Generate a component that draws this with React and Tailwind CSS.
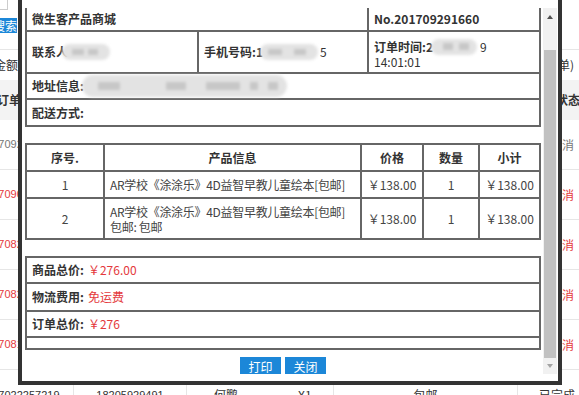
import React from 'react';

function Blur({ className = '', spots = [] }) {
  return (
    <span className={`relative inline-flex items-center rounded-full bg-[#e3e3e3] blur-[1.5px] ${className}`}>
      {spots.map((s, i) => (
        <span key={i} className={`absolute top-[30%] h-[40%] bg-[#c7c7c7] ${s}`} />
      ))}
    </span>
  );
}

const B = 'border-[#666]';

export default function App() {
  const rows = [
    { no: '201709291660', c: 'text-[#777]' },
    { no: '201709021530', c: 'text-[#e4393c]' },
    { no: '201708281202', c: 'text-[#e4393c]' },
    { no: '201708251135', c: 'text-[#e4393c]' },
    { no: '201708161019', c: 'text-[#e4393c]' },
  ];
  return (
    <div className="relative w-[579px] h-[395px] overflow-hidden bg-white font-['Noto_Sans_CJK_SC','Liberation_Sans',sans-serif] text-[12px] text-[#333]">
      {/* background page */}
      <div className="flex flex-col">
        <div className="h-[50px] flex flex-col border-b border-[#e6e6e6]">
          <div className="h-[10px] w-[8px] border border-t-0 border-l-0 border-[#ccc]" />
          <div className="mt-[8px] h-[15px] w-[17px] bg-[#1c87d8] text-white flex justify-end overflow-hidden leading-[15px]">
            <span className="whitespace-nowrap">搜索</span>
          </div>
        </div>
        <div className="h-[30px] flex justify-between items-center">
          <div className="w-[18px] flex justify-end overflow-hidden whitespace-nowrap">金额</div>
          <div className="pr-[5px] whitespace-nowrap">(多选订单)</div>
        </div>
        <div className="h-[40px] flex justify-between items-center bg-[#f3f3f3] font-bold">
          <div className="ml-[-3px] whitespace-nowrap">订单号</div>
          <div className="w-[46px] flex justify-center whitespace-nowrap">订单状态</div>
        </div>
        {rows.map((r, i) => (
          <div key={i} className="h-[50px] flex justify-between items-center border-b border-[#e6e6e6]">
            <div className={`ml-[-20px] text-[11px] font-['Liberation_Sans',sans-serif] ${r.c}`}>{r.no}</div>
            <div className={`w-[46px] flex justify-center whitespace-nowrap ${r.c}`}>已取消</div>
          </div>
        ))}
        <div className="h-[50px] grid grid-cols-[73px_113px_147px_184px_1fr] items-center">
          <div className="ml-[-20px] text-[11px] font-['Liberation_Sans',sans-serif]">2017022257219</div>
          <div className="h-full border-l border-[#e6e6e6] flex items-center justify-center text-[11px] font-['Liberation_Sans',sans-serif]">18205929491</div>
          <div className="h-full border-l border-[#e6e6e6] flex items-center pl-[27px] gap-[60px]"><span>何鹏</span><span>X1</span></div>
          <div className="h-full border-l border-[#e6e6e6] flex items-center justify-center">包邮</div>
          <div className="h-full border-l border-[#e6e6e6] flex items-center pl-[21px] whitespace-nowrap">已完成</div>
        </div>
      </div>

      {/* modal */}
      <div className="absolute left-[18px] top-[-4px] w-[544px] h-[389px] border-4 border-[#333] bg-white flex pt-[8px] pl-[3px] pr-[1px]">
        <div className="w-[516px] h-[366px] overflow-hidden flex flex-col">
          {/* info table */}
          <div className={`border-x-2 border-b-2 ${B}`}>
            <div className="h-[22px] flex">
              <div className="w-[340px] pl-[5px] flex items-center font-bold">微生客产品商城</div>
              <div className={`flex-1 border-l-2 ${B} pl-[5px] flex items-center font-bold`}>No.201709291660</div>
            </div>
            <div className={`h-[42px] flex border-t-2 ${B}`}>
              <div className="w-[170px] pl-[5px] flex items-center">
                <span className="font-bold">联系人</span>
                <Blur className="w-[48px] h-[16px] ml-[-6px]" spots={['left-[10px] w-[12px]', 'left-[26px] w-[10px]']} />
              </div>
              <div className={`w-[170px] border-l-2 ${B} pl-[5px] flex items-center`}>
                <span className="font-bold">手机号码:1</span>
                <Blur className="w-[58px] h-[16px] ml-[-3px]" spots={['left-[8px] w-[14px]', 'left-[34px] w-[12px]']} />
                <span className="ml-[2px]">5</span>
              </div>
              <div className={`flex-1 border-l-2 ${B} pl-[5px] pt-[3px] flex flex-col justify-center leading-[14px]`}>
                <div className="flex items-center">
                  <span className="font-bold">订单时间:2</span>
                  <Blur className="w-[46px] h-[16px] ml-[-2px]" spots={['left-[12px] w-[10px]', 'left-[28px] w-[10px]']} />
                  <span className="ml-[3px]">9</span>
                </div>
                <div>14:01:01</div>
              </div>
            </div>
            <div className={`h-[26px] flex items-center border-t-2 ${B} pl-[5px]`}>
              <span className="font-bold">地址信息:</span>
              <Blur
                className="w-[205px] h-[22px] ml-[-2px]"
                spots={['left-[16px] w-[22px]', 'left-[84px] w-[20px]', 'left-[124px] w-[34px]', 'left-[168px] w-[8px]', 'left-[186px] w-[10px]']}
              />
            </div>
            <div className={`h-[27px] flex items-center border-t-2 ${B} pl-[5px] font-bold`}>配送方式:</div>
          </div>

          {/* product table */}
          <div className={`mt-[16px] border-2 ${B}`}>
            <div className="h-[25px] flex font-bold">
              <div className="w-[76px] flex items-center justify-center">序号.</div>
              <div className={`w-[257px] border-l-2 ${B} flex items-center justify-center`}>产品信息</div>
              <div className={`w-[62px] border-l-2 ${B} flex items-center justify-center`}>价格</div>
              <div className={`w-[56px] border-l-2 ${B} flex items-center justify-center`}>数量</div>
              <div className={`flex-1 border-l-2 ${B} flex items-center justify-center`}>小计</div>
            </div>
            <div className={`h-[27px] flex border-t-2 ${B} text-[#444]`}>
              <div className="w-[76px] flex items-center justify-center">1</div>
              <div className={`w-[257px] border-l-2 ${B} flex items-center pl-[5px] whitespace-nowrap tracking-[-0.3px]`}>AR学校《涂涂乐》4D益智早教儿童绘本[包邮]</div>
              <div className={`w-[62px] border-l-2 ${B} flex items-center justify-center`}>￥138.00</div>
              <div className={`w-[56px] border-l-2 ${B} flex items-center justify-center`}>1</div>
              <div className={`flex-1 border-l-2 ${B} flex items-center justify-center`}>￥138.00</div>
            </div>
            <div className={`h-[41px] flex border-t-2 ${B} text-[#444]`}>
              <div className="w-[76px] flex items-center justify-center">2</div>
              <div className={`w-[257px] border-l-2 ${B} flex flex-col justify-center pl-[5px] leading-[15px] whitespace-nowrap tracking-[-0.3px]`}>
                <div>AR学校《涂涂乐》4D益智早教儿童绘本[包邮]</div>
                <div>包邮: 包邮</div>
              </div>
              <div className={`w-[62px] border-l-2 ${B} flex items-center justify-center`}>￥138.00</div>
              <div className={`w-[56px] border-l-2 ${B} flex items-center justify-center`}>1</div>
              <div className={`flex-1 border-l-2 ${B} flex items-center justify-center`}>￥138.00</div>
            </div>
          </div>

          {/* summary table */}
          <div className={`mt-[16px] border-2 ${B}`}>
            <div className="h-[24px] flex items-center pl-[5px]">
              <span className="font-bold">商品总价:</span>
              <span className="ml-[4px] text-[#e4393c]">￥276.00</span>
            </div>
            <div className={`h-[28px] flex items-center pl-[5px] border-t-2 ${B}`}>
              <span className="font-bold">物流费用:</span>
              <span className="ml-[4px] text-[#e4393c]">免运费</span>
            </div>
            <div className={`h-[26px] flex items-center pl-[5px] border-t-2 ${B}`}>
              <span className="font-bold">订单总价:</span>
              <span className="ml-[4px] text-[#e4393c]">￥276</span>
            </div>
            <div className={`h-[12px] border-t-2 ${B}`} />
          </div>

          {/* buttons */}
          <div className="mt-[7px] flex justify-center gap-[4px] shrink-0">
            <button className="w-[41px] h-[20px] bg-[#1c87d8] text-white text-[12px] leading-[20px]">打印</button>
            <button className="w-[41px] h-[20px] bg-[#1c87d8] text-white text-[12px] leading-[20px]">关闭</button>
          </div>
        </div>

        {/* scrollbar */}
        <div className="ml-[2px] w-[14px] h-[366px] bg-[#f1f1f1] flex flex-col">
          <div className="h-[17px] flex items-center justify-center">
            <div className="w-0 h-0 border-x-[3px] border-x-transparent border-b-[4px] border-b-[#505050]" />
          </div>
          <div className="h-[25px]" />
          <div className="h-[308px] mx-[1px] bg-[#c1c1c1]" />
          <div className="h-[16px] flex items-center justify-center">
            <div className="w-0 h-0 border-x-[3px] border-x-transparent border-t-[4px] border-t-[#a3a3a3]" />
          </div>
        </div>
      </div>
    </div>
  );
}
